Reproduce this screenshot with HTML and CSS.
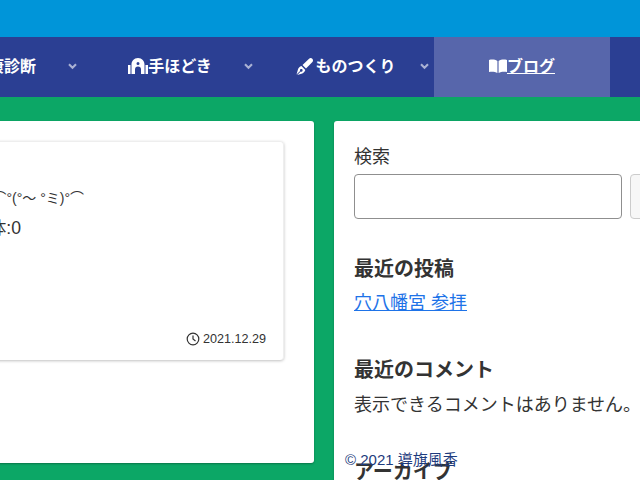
FILE: index.html
```html
<!DOCTYPE html>
<html lang="ja">
<head>
  <meta charset="UTF-8" />
  <meta name="viewport" content="width=device-width, initial-scale=1.0"/>
  <title>ブログ</title>
  <link rel="stylesheet" href="styles.css">
</head>
<body>
  <div class="topbar"></div>

  <nav class="nav">
    <a class="nav-item">
      <svg class="nav-icon" viewBox="0 0 20 16"><circle cx="10" cy="8" r="7"/></svg>
      <span class="nav-text">健康診断</span>
      <svg class="chevron" viewBox="0 0 10 8"><path d="M1 1.500 5 5.500 9 1.500"/></svg>
    </a>
    <a class="nav-item">
      <svg class="nav-icon" viewBox="0 0 20 16"><path fill-rule="evenodd" d="M0 7h2.500v9H0zM17.500 7H20v9h-2.500zM3.500 16V6.500C3.500 3 6 0 10 0s6.500 3 6.500 6.500V16H13v-4.500a3 3 0 0 0-6 0V16zM8.500 5.500a1.500 1.500 0 1 0 3 0 1.500 1.500 0 1 0-3 0z"/></svg>
      <span class="nav-text">手ほどき</span>
      <svg class="chevron" viewBox="0 0 10 8"><path d="M1 1.500 5 5.500 9 1.500"/></svg>
    </a>
    <a class="nav-item">
      <svg class="nav-icon pen" viewBox="0 0 17 17"><path fill-rule="evenodd" d="M16.300.7c-1-1-2.400-.8-3.500.2L6.500 7l3.500 3.500 6.200-6.300c1-1.100 1.100-2.500.1-3.500zM5.500 8C3.500 8.500 2.300 10 1.800 12L.5 16.500l3.600-3.600a1.300 1.300 0 1 1 .7.700L1.200 17 5.500 15.700c2-.6 3.300-1.800 3.800-3.700z"/></svg>
      <span class="nav-text">ものつくり</span>
      <svg class="chevron" viewBox="0 0 10 8"><path d="M1 1.500 5 5.500 9 1.500"/></svg>
    </a>
    <a class="nav-item active">
      <svg class="nav-icon book" viewBox="0 0 18 14"><path d="M0 1c3-.8 6-.6 8.400 1v12C6 12.600 3 12.400 0 13zM18 1c-3-.8-6-.6-8.400 1v12c2.400-1.400 5.400-1.600 8.400-1z"/></svg>
      <span class="nav-text underline">ブログ</span>
    </a>
  </nav>

  <main class="content">
    <section class="panel main-panel">
      <article class="card">
        <div class="card-body">
          <p class="kaomoji">⌒°(°～ °ミ)°⌒</p>
          <p class="count">体:0</p>
        </div>
        <div class="card-date">
          <svg class="clock" viewBox="0 0 14 14"><circle cx="7" cy="7" r="5.800"/><path d="M7 3.500V7l2.500 2"/></svg>
          <span>2021.12.29</span>
        </div>
      </article>
    </section>

    <aside class="panel side-panel">
      <div class="widget search">
        <label class="search-label" for="s">検索</label>
        <div class="search-row">
          <input class="search-input" id="s" type="text">
          <button class="search-button">検索</button>
        </div>
      </div>
      <div class="widget recent">
        <h2>最近の投稿</h2>
        <a class="post-link">穴八幡宮 参拝</a>
      </div>
      <div class="widget comments">
        <h2>最近のコメント</h2>
        <p>表示できるコメントはありません。</p>
      </div>
      <div class="widget archive">
        <h2>アーカイブ</h2>
      </div>
    </aside>
  </main>

  <footer class="copyright">© 2021 導旗風香</footer>
</body>
</html>
```

FILE: styles.css
```css
html, body {
  height: 100%;
}
body {
  margin: 0;
  overflow: hidden;
  width: 640px;
  height: 480px;
  position: relative;
  background-color: #0ca766;
  color: #333;
  font-family: "Liberation Sans", "Noto Sans CJK JP", sans-serif;
}
.topbar {
  height: 37px;
  background-color: #0095d9;
}

/* nav: the first item runs off the left edge */
.nav {
  display: flex;
  height: 60px;
  width: 734px;
  margin-left: -94px;
  background-color: #2b3f93;
  color: #fff;
  font-size: 16px;
  font-weight: 700;
}
.nav-item {
  position: relative;
  flex: 0 0 176px;
  display: flex;
  align-items: center;
  justify-content: center;
}
.nav-item.active {
  background-color: #5766ab;
}
.nav-text {
  line-height: 24px;
}
.nav-icon {
  width: 20px;
  height: 16px;
  fill: #fff;
  margin-bottom: 2px;
}
.nav-icon.pen {
  width: 17px;
  height: 17px;
  margin-right: 2px;
}
.nav-icon.book {
  width: 18px;
  height: 14px;
}
.underline {
  text-decoration: underline;
}
.chevron {
  position: absolute;
  right: 5px;
  top: 26px;
  width: 9px;
  height: 7px;
  fill: none;
  stroke: #aab2d4;
  stroke-width: 2.400;
}

.content {
  display: flex;
  gap: 20px;
  margin-top: 24px;
  margin-left: -60px;
  width: 760px;
}
.panel {
  background-color: #fff;
  border-radius: 3px;
  box-shadow: 0 1px 2px rgba(0,0,0,.3);
  box-sizing: border-box;
}
.main-panel {
  flex: 0 0 374px;
  height: 342px;
  padding: 20px 30px 0 0;
}
.card {
  height: 219px;
  box-sizing: border-box;
  border-radius: 4px;
  border: 1px solid #eee;
  border-bottom: 0;
  box-shadow: 0 1px 3px rgba(0,0,0,.25);
  display: flex;
  flex-direction: column;
  justify-content: space-between;
  padding: 44px 17px 14px 0;
  font-size: 14px;
}
.card-body {
  text-align: right;
  padding-right: 182px;
}
.kaomoji {
  margin: 0;
  line-height: 24px;
  white-space: nowrap;
}
.count {
  margin: 6px 0 0;
  padding-right: 63px;
  font-size: 17.600px;
  line-height: 24px;
  white-space: nowrap;
}
.card-date {
  display: flex;
  align-items: center;
  justify-content: flex-end;
  gap: 3px;
  font-size: 12.600px;
}
.clock {
  width: 14px;
  height: 14px;
  fill: none;
  stroke: #333;
  stroke-width: 1.200;
}

.side-panel {
  flex: 1;
  height: 420px;
  padding: 20px;
}
.search-label {
  display: block;
  padding-top: 1px;
  font-size: 18px;
  line-height: 30px;
}
.search-row {
  display: flex;
  gap: 8px;
  margin-top: 2px;
}
.search-input {
  width: 268px;
  height: 45px;
  box-sizing: border-box;
  border: 1px solid #8f8f8f;
  border-radius: 4px;
  padding: 0;
  flex: none;
}
.search-button {
  width: 80px;
  height: 45px;
  flex: none;
  background-color: #f7f7f7;
  border: 1px solid #ccc;
  border-radius: 4px;
  font-size: 16px;
}
.widget h2 {
  margin: 0;
  font-size: 20px;
  line-height: 28px;
  font-weight: 700;
}
.recent {
  margin-top: 36px;
}
.post-link {
  display: block;
  margin-top: 6px;
  color: #1e73e8;
  font-size: 18px;
  line-height: 28px;
  text-decoration: underline;
  white-space: nowrap;
}
.comments {
  margin-top: 39px;
}
.comments p {
  margin: 7px 0 0;
  font-size: 18px;
  line-height: 28px;
  white-space: nowrap;
}
.archive {
  margin-top: 39px;
}

.copyright {
  position: absolute;
  left: 345px;
  top: 451px;
  font-size: 15px;
  line-height: 18px;
  color: #1d3b7d;
}
```
